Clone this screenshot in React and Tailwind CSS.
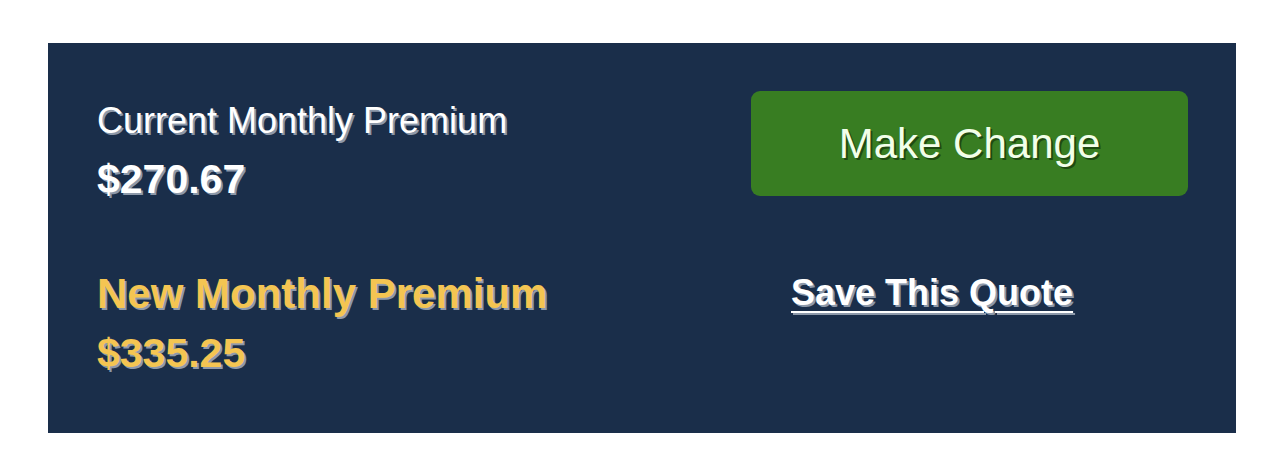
import React from "react";

const ARIAL = { fontFamily: '"Liberation Sans", Arial, sans-serif' };

export default function App() {
  return (
    <div className="min-h-screen bg-white pt-[43px] px-[48px]" style={ARIAL}>
      <div className="flex h-[390px] justify-between bg-[#1a2e4a] pl-[49px] pr-[48px]">
        <div className="flex flex-col pt-[60px]">
          <p className="text-[36px] leading-none text-white [text-shadow:2px_2px_0_#8d99aa]">
            Current Monthly Premium
          </p>
          <p className="mt-[20px] text-[41px] font-bold leading-none text-white [text-shadow:2px_2px_0_#8d99aa]">
            $270.67
          </p>
          <p className="mt-[73px] text-[42px] font-bold leading-none text-[#f4c552] [text-shadow:2px_2px_0_#8d99aa]">
            New Monthly Premium
          </p>
          <p className="mt-[18px] text-[41px] font-bold leading-none text-[#f4c552] [text-shadow:2px_2px_0_#8d99aa]">
            $335.25
          </p>
        </div>
        <div className="flex w-[437px] flex-col pt-[48px]">
          <button
            type="button"
            className="flex h-[105px] w-full items-center justify-center rounded-[9px] bg-[#387d22] text-[42px] leading-none text-[#f2ffe9] [text-shadow:2px_2px_0_#1f4a12]"
          >
            Make Change
          </button>
          <a
            href="#"
            className="ml-[40px] mt-[79px] self-start text-[36px] font-bold leading-none text-white underline decoration-2 underline-offset-[6px] [text-shadow:2px_2px_0_#8d99aa]"
          >
            Save This Quote
          </a>
        </div>
      </div>
    </div>
  );
}
